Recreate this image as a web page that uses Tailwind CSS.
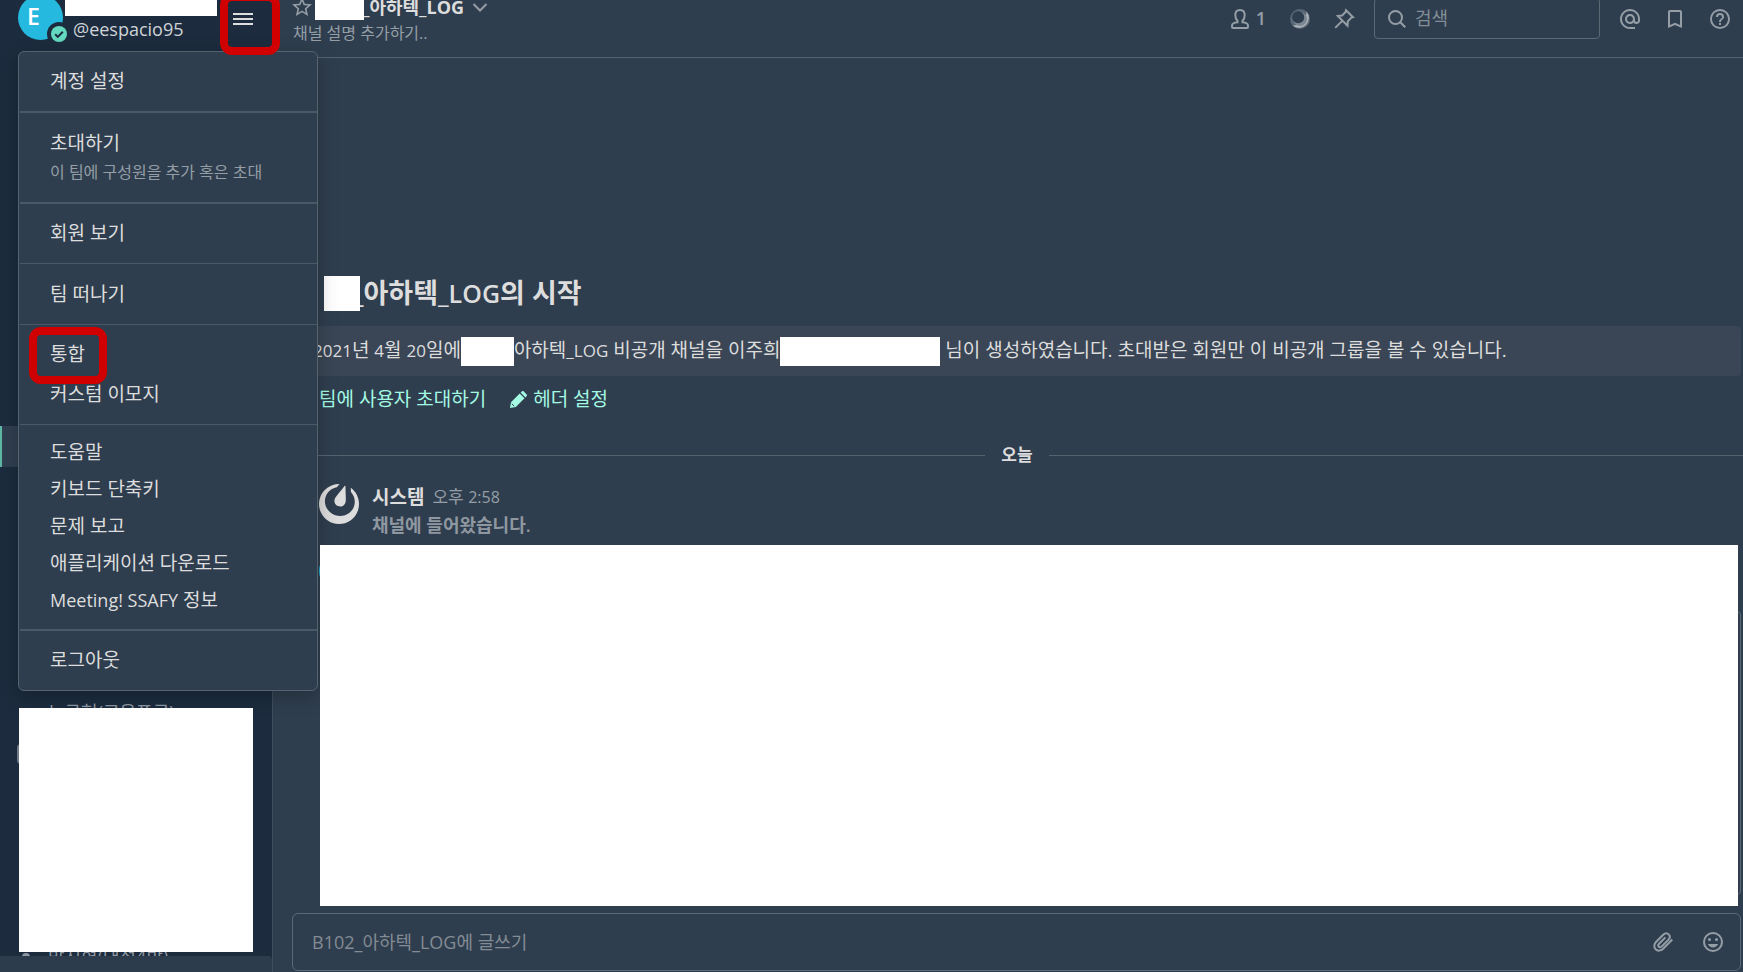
<!doctype html>
<html lang="ko">
<head>
  <meta charset="UTF-8" />
  <meta name="viewport" content="width=device-width, initial-scale=1.0" />
  <title>아하텍_LOG - Meeting! SSAFY</title>
  <script src="https://cdn.jsdelivr.net/npm/@tailwindcss/browser@4"></script>
</head>
<body class="bg-[#2f3e4e] text-[#dddddd] text-[19px] font-['Open_Sans','Noto_Sans_CJK_KR',sans-serif]">
  <div id="app" class="relative flex h-screen overflow-hidden">

    <!-- Sidebar -->
    <aside class="w-[273px] shrink-0 flex flex-col bg-[#1c2c3e] border-r border-[#3f4e5d]">
      <header class="h-12 shrink-0 flex items-start pl-[18px]">
        <div class="relative shrink-0 -mt-[5px]">
          <div class="size-[45px] rounded-full bg-[#25b9e0] text-white text-[23px] font-semibold leading-[43px] pl-[9px]">E</div>
          <span class="absolute -right-2 -bottom-1.5 size-6 rounded-full bg-[#1c2c3e] flex items-center justify-center">
            <svg class="size-4" viewBox="0 0 16 16" fill="none"><circle cx="8" cy="8" r="8" fill="#63d9c0" /><path d="M4.2 8.3l2.6 2.6 5-5.2" stroke="#1c2c3e" stroke-width="2" /></svg>
          </span>
        </div>
        <div class="ml-0.5 w-[152px]">
          <div class="h-4 bg-white"></div>
          <div class="pl-2 text-[18px] leading-[26px] text-[#cfd3d7]">@eespacio95</div>
        </div>
        <button type="button" aria-label="메뉴" class="ml-4 mt-[13px] h-3 w-5 flex flex-col justify-between">
          <span class="h-0.5 w-full bg-[#dddddd]"></span>
          <span class="h-0.5 w-full bg-[#dddddd]"></span>
          <span class="h-0.5 w-full bg-[#dddddd]"></span>
        </button>
      </header>

      <nav class="relative flex-1 overflow-hidden text-[18px] text-[#8f98a1]">
        <ul class="pt-[378px]">
          <li class="h-[41px] bg-[#303f50] border-l-2 border-[#5fb9a6]"></li>
          <li class="mt-[225px] h-[41px] flex items-center pl-[22px]">
            <span class="size-2 rounded-full bg-[#63d9c0]"></span>
            <a href="#" class="ml-[18px]">노규현(교육프로)</a>
          </li>
          <li class="h-[43px] pl-[17px] pt-[11px]"><span class="block h-5 w-5 rounded-sm bg-[#6f7a85]"></span></li>
          <li class="mt-[160px] h-[41px] flex items-center pl-[22px]">
            <span class="size-2 rounded-full bg-[#8f98a1]"></span>
            <a href="#" class="ml-[18px]">박지형(대전4반)</a>
          </li>
        </ul>
        <div class="absolute z-10 left-[19px] right-[19px] top-[660px] h-[244px] bg-white"></div>
      </nav>
      <div class="h-4 shrink-0 bg-[#2d3c4c] rounded-tr"></div>
    </aside>

    <!-- Channel -->
    <main class="flex-1 min-w-0 flex flex-col">
      <header class="h-[58px] shrink-0 flex justify-between border-b border-[#56636f] pl-[17px] pr-[11px] text-[#959ea6]">
        <div class="-mt-2">
          <div class="flex h-[30px] items-center">
            <svg class="size-6" viewBox="0 0 24 24" fill="currentColor"><path d="M12,15.39L8.24,17.66L9.23,13.38L5.91,10.5L10.29,10.13L12,6.09L13.71,10.13L18.09,10.5L14.77,13.38L15.76,17.66M22,9.24L14.81,8.63L12,2L9.19,8.63L2,9.24L7.45,13.97L5.82,21L12,17.27L18.18,21L16.54,13.97L22,9.24Z" /></svg>
            <span class="relative ml-px -mr-0.5 mt-1 h-[22px] w-[49px] bg-white"></span>
            <h1 class="font-bold text-[18px] text-[#dddddd]">_아하텍_LOG</h1>
            <svg class="ml-2 size-4" viewBox="0 0 16 16" fill="none" stroke="currentColor" stroke-width="2"><path d="M1.500 5l6.500 6.500L14.500 5" /></svg>
          </div>
          <p class="pl-[3px] text-[16px] leading-[22px]">채널 설명 추가하기..</p>
        </div>
        <div class="flex h-[37px] items-center">
          <button type="button" class="flex items-center gap-1 text-[18px] font-semibold">
            <svg class="size-6" viewBox="0 0 24 24" fill="none" stroke="currentColor" stroke-width="2"><path d="M12 3c-3 0-4.700 2-4.700 5 0 2.300.8 4.500 2.200 5.700v1.600C6.500 15.600 4 16.600 4 18.800V20c0 .6.400 1 1 1h14c.6 0 1-.4 1-1v-1.200c0-2.200-2.500-3.200-5.500-3.500v-1.600c1.400-1.200 2.200-3.400 2.200-5.700 0-3-1.700-5-4.700-5z" /></svg>
            1
          </button>
          <button type="button" aria-label="플레이북" class="ml-[22px]">
            <svg class="size-6" viewBox="0 0 24 24"><circle cx="12" cy="12" r="10" fill="#5a6774" /><path d="M18.500 4.400A10 10 0 0 1 4.400 18.500A14 14 0 0 0 18.500 4.400z" fill="#a9b0b7" /><circle cx="12" cy="12" r="7" fill="#7b8792" /><circle cx="10.200" cy="10.200" r="6" fill="#2f3e4e" /></svg>
          </button>
          <button type="button" aria-label="고정" class="ml-5">
            <svg class="size-6" viewBox="0 0 24 24" fill="none" stroke="currentColor" stroke-width="2"><path d="M14 3.200l7 7-1.600.4-3.600 3.800-.3 4.300L5.800 9l4.300-.5 3.500-3.600zM10.500 13.600L3.200 20.900" /></svg>
          </button>
          <label class="ml-[18px] flex h-[41px] w-[226px] shrink-0 items-center gap-2 rounded border border-[#5d6975] pl-3">
            <svg class="size-5 shrink-0" viewBox="0 0 20 20" fill="none" stroke="currentColor" stroke-width="2"><circle cx="8.500" cy="8.500" r="6.500" /><path d="M13.300 13.300l5 5" /></svg>
            <input type="text" aria-label="검색" placeholder="검색" class="min-w-0 flex-1 bg-transparent text-[18px] outline-none placeholder:text-[#838e97]" />
          </label>
          <button type="button" aria-label="멘션" class="ml-[18px]">
            <svg class="size-6" viewBox="0 0 24 24" fill="currentColor"><path d="M12,15C12.81,15 13.5,14.7 14.11,14.11C14.7,13.5 15,12.81 15,12C15,11.19 14.7,10.5 14.11,9.89C13.5,9.3 12.81,9 12,9C11.19,9 10.5,9.3 9.89,9.89C9.3,10.5 9,11.19 9,12C9,12.81 9.3,13.5 9.89,14.11C10.5,14.7 11.19,15 12,15M12,2C14.75,2 17.1,3 19.05,4.95C21,6.9 22,9.25 22,12V13.45C22,14.45 21.65,15.3 21,16C20.3,16.67 19.5,17 18.5,17C17.3,17 16.31,16.5 15.56,15.5C14.56,16.5 13.38,17 12,17C10.63,17 9.45,16.5 8.46,15.54C7.5,14.55 7,13.38 7,12C7,10.63 7.5,9.45 8.46,8.46C9.45,7.5 10.63,7 12,7C13.38,7 14.55,7.5 15.54,8.46C16.5,9.45 17,10.63 17,12V13.45C17,13.86 17.16,14.22 17.46,14.53C17.76,14.84 18.11,15 18.5,15C18.92,15 19.27,14.84 19.57,14.53C19.87,14.22 20,13.86 20,13.45V12C20,9.81 19.23,7.93 17.65,6.35C16.07,4.77 14.19,4 12,4C9.81,4 7.93,4.77 6.35,6.35C4.77,7.93 4,9.81 4,12C4,14.19 4.77,16.07 6.35,17.65C7.93,19.23 9.81,20 12,20H17V22H12C9.25,22 6.9,21 4.95,19.05C3,17.1 2,14.75 2,12C2,9.25 3,6.9 4.95,4.95C6.9,3 9.25,2 12,2Z" /></svg>
          </button>
          <button type="button" aria-label="저장됨" class="ml-[21px]">
            <svg class="size-6" viewBox="0 0 24 24" fill="currentColor"><path d="M17,18L12,15.82L7,18V5H17M17,3H7A2,2 0 0,0 5,5V21L12,18L19,21V5C19,3.89 18.1,3 17,3Z" /></svg>
          </button>
          <button type="button" aria-label="도움말" class="ml-[21px]">
            <svg class="size-6" viewBox="0 0 24 24" fill="currentColor"><path d="M11,18H13V16H11V18M12,2A10,10 0 0,0 2,12A10,10 0 0,0 12,22A10,10 0 0,0 22,12A10,10 0 0,0 12,2M12,20C7.59,20 4,16.41 4,12C4,7.59 7.59,4 12,4C16.41,4 20,7.59 20,12C20,16.41 16.41,20 12,20M12,6A4,4 0 0,0 8,10H10A2,2 0 0,1 12,8A2,2 0 0,1 14,10C14,12 11,11.75 11,15H13C13,12.75 16,12.5 16,10A4,4 0 0,0 12,6Z" /></svg>
          </button>
        </div>
      </header>

      <!-- Posts -->
      <section class="flex-1 min-h-0 flex flex-col justify-end pb-[7px]">
        <div class="flex h-10 items-center pl-[51px]">
          <span class="relative -mr-2 h-[35px] w-9 bg-white"></span>
          <h2 class="text-[27px] font-semibold">_아하텍<span class="text-[25px]">_LOG</span>의 시작</h2>
        </div>
        <p class="mt-[13px] ml-[19px] mr-0.5 h-[50px] rounded bg-[#3a4655] pl-[21px] leading-[48px] whitespace-nowrap"><span class="text-[17px]">2021</span>년 <span class="text-[17px]">4</span>월 <span class="text-[17px]">20</span>일에<span class="inline-block h-[29px] w-[53px] bg-white align-middle"></span>아하텍<span class="text-[17px]">_LOG</span> 비공개 채널을 이주희<span class="inline-block h-[29px] w-40 bg-white align-middle"></span> 님이 생성하였습니다. 초대받은 회원만 이 비공개 그룹을 볼 수 있습니다.</p>
        <div class="mt-[3px] flex h-10 items-center gap-6 pl-[46px] text-[#a4f9e3]">
          <a href="#">팀에 사용자 초대하기</a>
          <a href="#" class="flex items-center gap-1.5">
            <svg class="size-[17px]" viewBox="0 0 17 17" fill="currentColor"><path d="M1 11.200L9.700 2.500l4.800 4.800-8.700 8.700L0 17zM10.600 1.600L11.800.5c.6-.6 1.400-.6 2 0l2.700 2.700c.6.600.6 1.400 0 2L15.400 6.400z" /><path d="M1.800 12.800l2.400 2.400" stroke="#2f3e4e" /></svg>
            헤더 설정
          </a>
        </div>
        <div class="mt-6 flex h-6 items-center gap-4 pl-[18px]">
          <span class="h-px flex-1 bg-[#56636f]"></span>
          <span class="text-[17px] font-semibold">오늘</span>
          <span class="h-px flex-1 bg-[#56636f]"></span>
        </div>
        <article class="mt-4 flex h-[62px] pl-[46px]">
          <svg class="mt-px size-10" viewBox="0 0 24 24" fill="#dddddd"><path d="M12.081 0C7.048-.034 2.339 3.125.637 8.153c-2.125 6.276 1.24 13.086 7.516 15.21 6.276 2.125 13.086-1.24 15.21-7.516 1.727-5.1-.172-10.552-4.311-13.557l.126 2.547c2.065 2.282 2.88 5.512 1.852 8.549-1.534 4.532-6.594 6.915-11.3 5.321-4.708-1.593-7.28-6.559-5.745-11.092 1.031-3.046 3.655-5.121 6.694-5.67l1.642-1.94A4.87 4.87 0 0 0 12.08 0zm3.528 1.094a.284.284 0 0 0-.123.024l-.004.001a.33.33 0 0 0-.109.071c-.145.142-.657.828-.657.828L13.6 3.4l-1.3 1.585-2.232 2.776s-1.024 1.278-.798 2.851c.226 1.574 1.396 2.34 2.304 2.648.907.307 2.302.408 3.438-.704 1.135-1.112 1.098-2.75 1.098-2.75l-.087-3.56-.07-2.05-.047-1.775s.01-.856-.02-1.057a.33.33 0 0 0-.035-.107l-.006-.012-.007-.011a.277.277 0 0 0-.229-.14z" /></svg>
          <div class="ml-[13px]">
            <div class="flex h-7 items-center gap-2">
              <span class="font-bold">시스템</span>
              <time class="text-[17px] text-[#959ea6]">오후 <span class="text-[16px]">2:58</span></time>
            </div>
            <p class="text-[18px] leading-7 font-semibold text-[#8f98a1]">채널에 들어왔습니다.</p>
          </div>
        </article>
        <article class="relative ml-[19px] mr-0.5 h-[361px] pl-7 pr-[3px]">
          <span class="absolute left-[27px] top-1.5 size-10 rounded-full bg-[#25b9e0]"></span>
          <span class="absolute right-0 top-[66px] bottom-[11px] w-6 rounded border border-[#5d6975]"></span>
          <div class="relative z-10 h-full bg-white"></div>
        </article>
      </section>

      <form class="mb-px ml-[19px] mr-0.5 flex h-[58px] shrink-0 items-center rounded-md border border-[#5d6975] pl-[19px] pr-[15px] text-[#959ea6]">
        <input type="text" aria-label="글쓰기" placeholder="B102_아하텍_LOG에 글쓰기" class="min-w-0 flex-1 bg-transparent text-[18px] outline-none placeholder:text-[#838b94]" />
        <button type="button" aria-label="파일 첨부">
          <svg class="size-6" viewBox="0 0 24 24" fill="none" stroke="currentColor" stroke-width="2"><path d="M21.300 9.500l-9.200 9.200c-2.300 2.300-5.500 2.600-7.500.6s-1.700-5.200.6-7.500l7-7c1.700-1.700 4-1.900 5.500-.4s1.300 3.800-.4 5.500l-6.500 6.500c-1 1-2.200 1.100-3 .3s-.7-2 .3-3l6.300-6.300" /></svg>
        </button>
        <button type="button" aria-label="이모지" class="ml-[26px]">
          <svg class="size-6" viewBox="0 0 24 24" fill="none"><circle cx="12" cy="12" r="9" stroke="currentColor" stroke-width="2" /><circle cx="8.500" cy="9.500" r="1.500" fill="currentColor" /><circle cx="15.500" cy="9.500" r="1.500" fill="currentColor" /><path d="M6.900 14h10.200c-.8 2-2.800 3.500-5.100 3.500S7.700 16 6.900 14z" fill="currentColor" /></svg>
        </button>
      </form>
    </main>

    <!-- Main menu -->
    <ul class="absolute left-[18px] top-[51px] w-[300px] rounded-md border border-[#56636f] bg-[#2f3e4e] shadow-[0_6px_20px_rgba(0,0,0,0.25)] *:ml-px *:pl-[30px] *:border-[#4b5967]">
      <li class="pt-[11px] pb-3">
        <a href="#" class="block leading-9">계정 설정</a>
      </li>
      <li class="border-t-2 pt-3 pb-[19px]">
        <a href="#" class="block leading-9">초대하기<span class="block text-[16px] leading-[22px] text-[#959ea6]">이 팀에 구성원을 추가 혹은 초대</span></a>
      </li>
      <li class="border-t-2 pt-[11px] pb-3">
        <a href="#" class="block leading-9">회원 보기</a>
      </li>
      <li class="border-t pt-3 pb-3">
        <a href="#" class="block leading-9">팀 떠나기</a>
      </li>
      <li class="border-t pt-[11px] pb-3">
        <a href="#" class="block leading-9">통합</a>
        <a href="#" class="mt-1 block leading-9">커스텀 이모지</a>
      </li>
      <li class="border-t pt-[9px] pb-2.5">
        <a href="#" class="block leading-[37px]">도움말</a>
        <a href="#" class="block leading-[37px]">키보드 단축키</a>
        <a href="#" class="block leading-[37px]">문제 보고</a>
        <a href="#" class="block leading-[37px]">애플리케이션 다운로드</a>
        <a href="#" class="block h-[37px] leading-[37px]"><span class="text-[18px]">Meeting! SSAFY</span> 정보</a>
      </li>
      <li class="border-t-2 pt-[11px] pb-3">
        <a href="#" class="block leading-9">로그아웃</a>
      </li>
    </ul>

    <!-- Highlights -->
    <div class="absolute left-[220px] -top-[7px] h-[62px] w-[60px] rounded-xl border-8 border-[#d00000]"></div>
    <div class="absolute left-[29px] top-[327px] h-[57px] w-[78px] rounded-xl border-8 border-[#d00000]"></div>
  </div>
</body>
</html>
